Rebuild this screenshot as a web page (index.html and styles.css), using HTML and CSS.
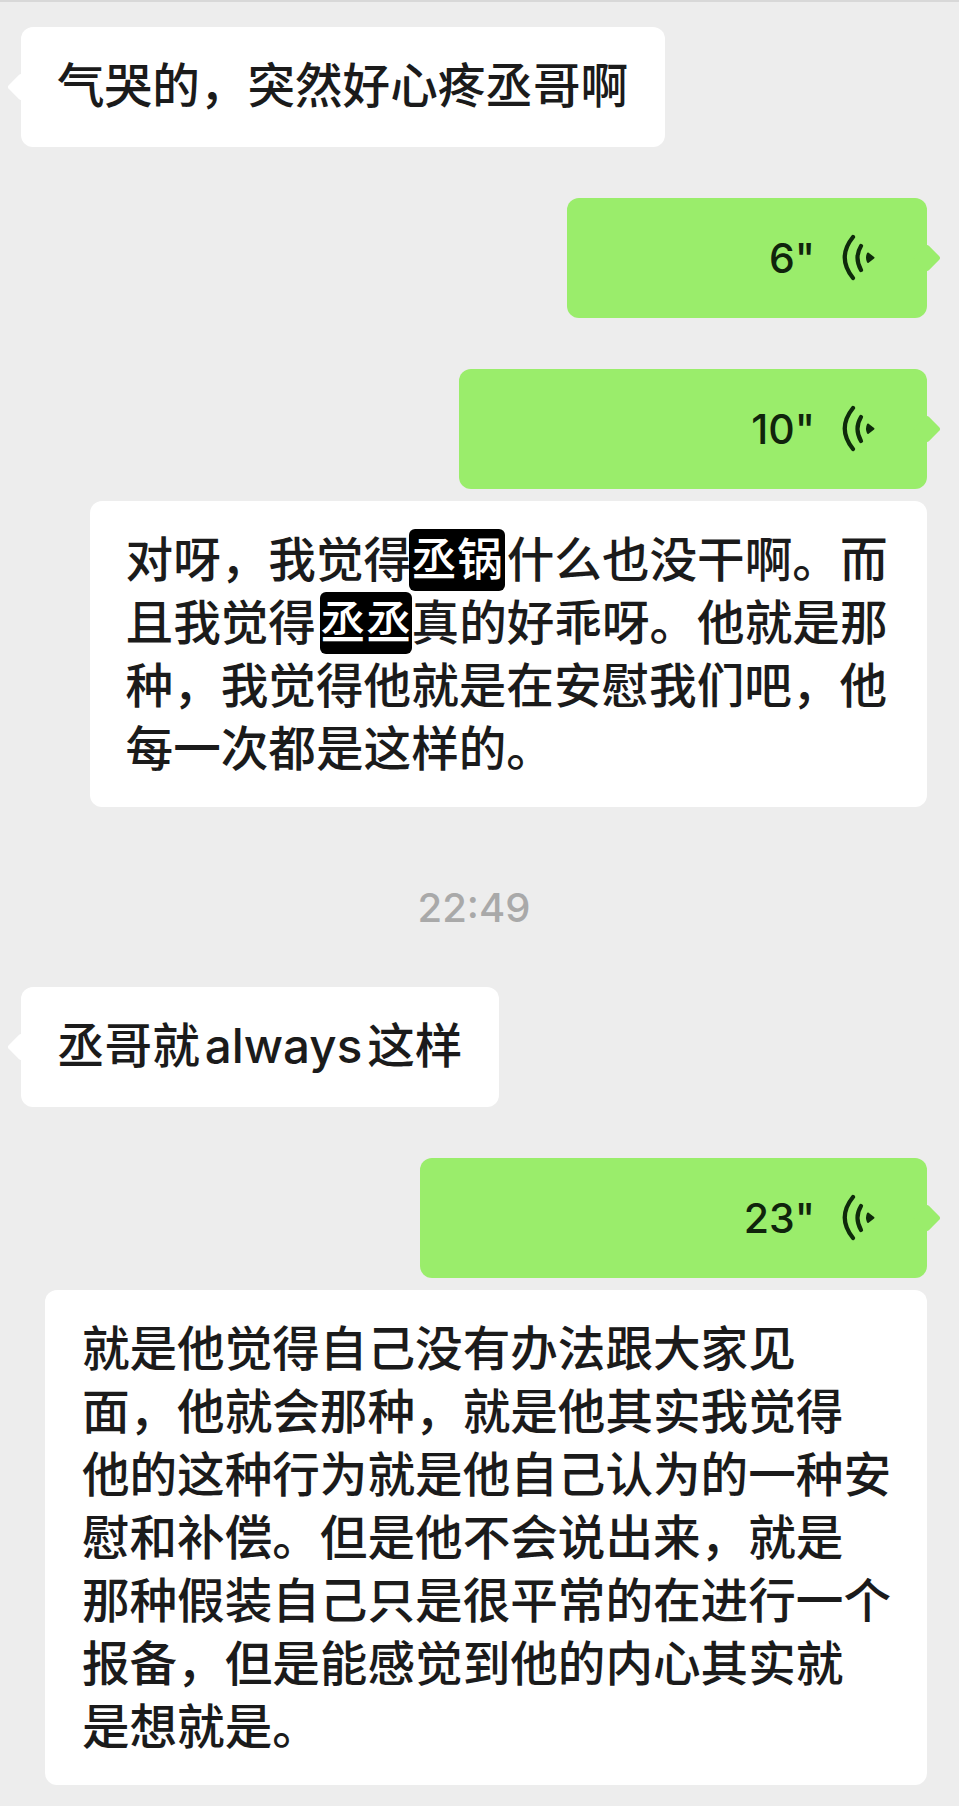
FILE: index.html
```html
<!DOCTYPE html>
<html lang="zh-CN">
<head>
  <meta charset="UTF-8">
  <title>Chat</title>
  <link rel="stylesheet" href="styles.css">
</head>
<body>
  <div class="chat">
    <div class="bubble left">气哭的，突然好心疼丞哥啊</div>

    <div class="bubble right voice" style="width: 360px">
      <span class="secs">6"</span>
      <svg class="wave" viewBox="0 0 36 50"><use href="#wave"></use></svg>
    </div>

    <div class="bubble right voice" style="width: 468px">
      <span class="secs">10"</span>
      <svg class="wave" viewBox="0 0 36 50"><use href="#wave"></use></svg>
    </div>

    <div class="bubble right text near">
      对呀，我觉得<span class="mark">丞锅</span>什么也没干啊。而<br>
      且我觉得<span class="mark tight">丞丞</span>真的好乖呀。他就是那<br>
      种，我觉得他就是在安慰我们吧，他<br>
      每一次都是这样的。
    </div>

    <div class="time">22:49</div>

    <div class="bubble left">丞哥就<span class="latin">always</span>这样</div>

    <div class="bubble right voice" style="width: 507px">
      <span class="secs">23"</span>
      <svg class="wave" viewBox="0 0 36 50"><use href="#wave"></use></svg>
    </div>

    <div class="bubble right text near wide">
      就是他觉得自己没有办法跟大家见<br>
      面，他就会那种，就是他其实我觉得<br>
      他的这种行为就是他自己认为的一种安<br>
      慰和补偿。但是他不会说出来，就是<br>
      那种假装自己只是很平常的在进行一个<br>
      报备，但是能感觉到他的内心其实就<br>
      是想就是。
    </div>
  </div>

  <svg class="defs" width="0" height="0">
    <g id="wave" fill="none" stroke="#0f2a0b" stroke-linecap="round" stroke-linejoin="round">
      <path d="M12 4 Q-4.5 24.5 12 45" stroke-width="4.2"></path>
      <path d="M20 13 Q13 24.5 20 37" stroke-width="4.2"></path>
      <path d="M27 20.5 L32.5 24.7 L27 29 Q25 24.7 27 20.5 Z" fill="#0f2a0b" stroke-width="2"></path>
    </g>
  </svg>
</body>
</html>
```

FILE: styles.css
```css
* {
  box-sizing: border-box;
}

body {
  margin: 0;
  background: #ededed;
  font-family: Inter, "Noto Sans CJK SC", sans-serif;
  font-weight: 500;
  color: #1b1b1b;
}

.chat {
  display: flex;
  flex-direction: column;
  align-items: flex-start;
  min-height: 1806px;
  padding: 25px 32px 23px 21px;
  border-top: 2px solid #d8d8d8;
}

.bubble {
  position: relative;
  min-height: 120px;
  margin-bottom: 51px;
  padding: 27px 39.5px 27px 36px;
  background: #fff;
  border-radius: 12px;
  font-size: 47.6px;
  line-height: 63px;
  white-space: nowrap;
}

.bubble::before {
  content: "";
  position: absolute;
  top: 50%;
  width: 20px;
  height: 20px;
  margin-top: -10px;
  background: inherit;
  border-radius: 3px;
  transform: rotate(45deg);
}

.left {
  padding-right: 37px;
}

.left::before {
  left: -10px;
}

.right {
  align-self: flex-end;
}

.right::before {
  right: -10px;
}

.text::before {
  display: none;
}

.near {
  margin-top: -39px;
  margin-bottom: 0;
}

.wide {
  padding-left: 37px;
  padding-right: 36px;
}

.voice {
  display: flex;
  align-items: center;
  justify-content: flex-end;
  padding: 0 50px 0 0;
  background: #9aed6b;
  color: #10240c;
}

.secs {
  font-size: 41px;
  margin-right: 26px;
}

.wave {
  width: 36px;
  height: 50px;
}

.mark {
  display: inline-block;
  height: 62px;
  margin: 1px 2px 0 -2px;
  padding: 0 2px;
  background: #000;
  color: #fff;
  border-radius: 6px;
  font-size: 45.8px;
  line-height: 62px;
  vertical-align: top;
}

.tight {
  margin-left: 4px;
  margin-right: 0;
  padding: 0;
}

.latin {
  margin: 0 5px;
  font-size: 47.5px;
}

.time {
  align-self: center;
  margin: 78px 0 56px;
  font-size: 40px;
  line-height: 46px;
  color: #a9a9a9;
}

.defs {
  position: absolute;
}
```
